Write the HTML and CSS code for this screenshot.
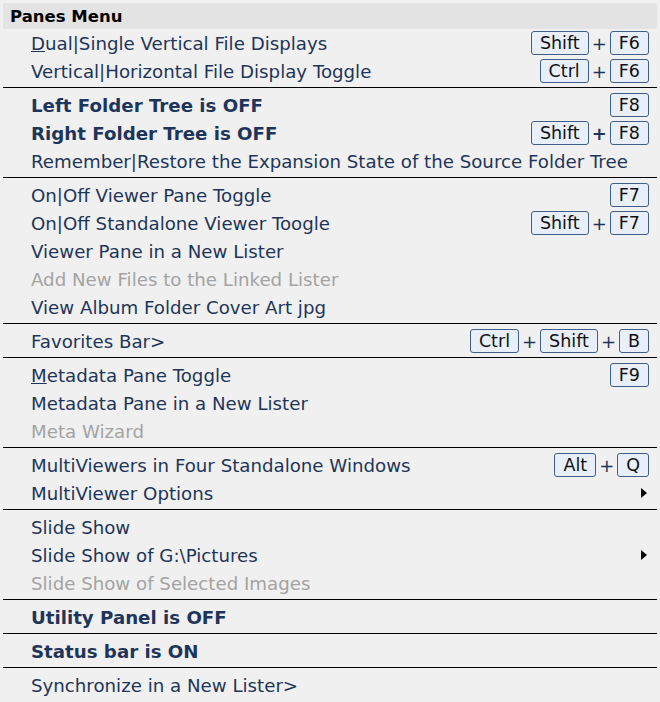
FILE: index.html
```html
<!DOCTYPE html>
<html lang="en">
<head>
  <meta charset="UTF-8" />
  <title>Panes Menu</title>
  <link rel="stylesheet" href="styles.css">
</head>
<body>
  <div class="menu">
    <div class="menu-title">Panes Menu</div>

    <div class="item"><span class="label"><u>D</u>ual|Single Vertical File Displays</span><span class="keys"><kbd>Shift</kbd><i>+</i><kbd>F6</kbd></span></div>
    <div class="item"><span class="label">Vertical|Horizontal File Display Toggle</span><span class="keys"><kbd>Ctrl</kbd><i>+</i><kbd>F6</kbd></span></div>
    <hr>
    <div class="item bold"><span class="label">Left Folder Tree is OFF</span><span class="keys"><kbd>F8</kbd></span></div>
    <div class="item bold"><span class="label">Right Folder Tree is OFF</span><span class="keys"><kbd>Shift</kbd><i>+</i><kbd>F8</kbd></span></div>
    <div class="item"><span class="label">Remember|Restore the Expansion State of the Source Folder Tree</span></div>
    <hr>
    <div class="item"><span class="label">On|Off Viewer Pane Toggle</span><span class="keys"><kbd>F7</kbd></span></div>
    <div class="item"><span class="label">On|Off Standalone Viewer Toogle</span><span class="keys"><kbd>Shift</kbd><i>+</i><kbd>F7</kbd></span></div>
    <div class="item"><span class="label">Viewer Pane in a New Lister</span></div>
    <div class="item disabled"><span class="label">Add New Files to the Linked Lister</span></div>
    <div class="item"><span class="label">View Album Folder Cover Art jpg</span></div>
    <hr>
    <div class="item"><span class="label">Favorites Bar&gt;</span><span class="keys"><kbd>Ctrl</kbd><i>+</i><kbd>Shift</kbd><i>+</i><kbd>B</kbd></span></div>
    <hr>
    <div class="item"><span class="label"><u>M</u>etadata Pane Toggle</span><span class="keys"><kbd>F9</kbd></span></div>
    <div class="item"><span class="label">Metadata Pane in a New Lister</span></div>
    <div class="item disabled"><span class="label">Meta Wizard</span></div>
    <hr>
    <div class="item"><span class="label">MultiViewers in Four Standalone Windows</span><span class="keys"><kbd>Alt</kbd><i>+</i><kbd>Q</kbd></span></div>
    <div class="item"><span class="label">MultiViewer Options</span><span class="arrow"></span></div>
    <hr>
    <div class="item"><span class="label">Slide Show</span></div>
    <div class="item"><span class="label">Slide Show of G:\Pictures</span><span class="arrow"></span></div>
    <div class="item disabled"><span class="label">Slide Show of Selected Images</span></div>
    <hr>
    <div class="item bold"><span class="label">Utility Panel is OFF</span></div>
    <hr>
    <div class="item bold"><span class="label">Status bar is ON</span></div>
    <hr>
    <div class="item"><span class="label">Synchronize in a New Lister&gt;</span></div>
  </div>
</body>
</html>
```

FILE: styles.css
```css
body { margin: 0; background: #f0f0f0; font-family: "DejaVu Sans", Verdana, sans-serif; font-size: 18.2px; color: #1e3559; }
.menu { padding: 3px 3px 0 3px; }
.menu-title { background: #e3e3e3; color: #000; font-weight: bold; font-size: 16.5px; height: 26px; line-height: 27px; padding-left: 7px; }
.item { display: flex; align-items: center; height: 28px; padding: 0 8px 0 28px; }
.item .label { flex: 1; white-space: nowrap; }
.item.bold { font-weight: bold; }
.item.disabled { color: #a3a3a3; }
.keys { display: flex; align-items: center; gap: 3px; }
.keys i { font-style: normal; font-size: 18px; color: #1e3559; }
kbd { font-family: inherit; font-weight: normal; font-size: 17.5px; color: #111; background: #e9eff8; border: 1px solid #3d5f8a; border-radius: 3px; padding: 0 8px; height: 22px; line-height: 22px; }
.arrow { width: 0; height: 0; border-top: 5px solid transparent; border-bottom: 5px solid transparent; border-left: 6px solid #000; margin-right: 2px; }
hr { border: 0; border-top: 1px solid #000; margin: 2px 0 3px 0; height: 0; }
```
